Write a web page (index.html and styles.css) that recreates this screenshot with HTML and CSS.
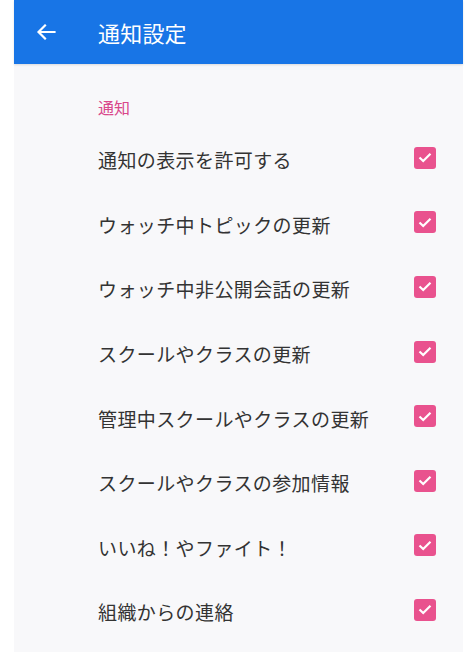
FILE: index.html
```html
<!DOCTYPE html>
<html lang="ja">
<head>
<meta charset="utf-8">
<title>通知設定</title>
<link rel="stylesheet" href="styles.css">
</head>
<body>
<div class="app">
  <header class="bar">
    <svg class="back" width="20" height="16" viewBox="0 0 20 16" aria-hidden="true">
      <path d="M18.5 8H3M9 1.5L2.5 8L9 14.5" fill="none" stroke="#fff" stroke-width="2.2" stroke-linecap="square"/>
    </svg>
    <h1 class="title">通知設定</h1>
  </header>
  <main class="content">
    <div class="section">通知</div>
    <ul class="list">
      <li class="row"><span class="label">通知の表示を許可する</span><span class="check"><svg width="14" height="11" viewBox="0 0 14 11"><path d="M1.5 5.5L5.2 9L12.5 1.8" fill="none" stroke="#fff" stroke-width="2.2"/></svg></span></li>
      <li class="row"><span class="label">ウォッチ中トピックの更新</span><span class="check"><svg width="14" height="11" viewBox="0 0 14 11"><path d="M1.5 5.5L5.2 9L12.5 1.8" fill="none" stroke="#fff" stroke-width="2.2"/></svg></span></li>
      <li class="row"><span class="label">ウォッチ中非公開会話の更新</span><span class="check"><svg width="14" height="11" viewBox="0 0 14 11"><path d="M1.5 5.5L5.2 9L12.5 1.8" fill="none" stroke="#fff" stroke-width="2.2"/></svg></span></li>
      <li class="row"><span class="label">スクールやクラスの更新</span><span class="check"><svg width="14" height="11" viewBox="0 0 14 11"><path d="M1.5 5.5L5.2 9L12.5 1.8" fill="none" stroke="#fff" stroke-width="2.2"/></svg></span></li>
      <li class="row"><span class="label">管理中スクールやクラスの更新</span><span class="check"><svg width="14" height="11" viewBox="0 0 14 11"><path d="M1.5 5.5L5.2 9L12.5 1.8" fill="none" stroke="#fff" stroke-width="2.2"/></svg></span></li>
      <li class="row"><span class="label">スクールやクラスの参加情報</span><span class="check"><svg width="14" height="11" viewBox="0 0 14 11"><path d="M1.5 5.5L5.2 9L12.5 1.8" fill="none" stroke="#fff" stroke-width="2.2"/></svg></span></li>
      <li class="row"><span class="label">いいね！やファイト！</span><span class="check"><svg width="14" height="11" viewBox="0 0 14 11"><path d="M1.5 5.5L5.2 9L12.5 1.8" fill="none" stroke="#fff" stroke-width="2.2"/></svg></span></li>
      <li class="row"><span class="label">組織からの連絡</span><span class="check"><svg width="14" height="11" viewBox="0 0 14 11"><path d="M1.5 5.5L5.2 9L12.5 1.8" fill="none" stroke="#fff" stroke-width="2.2"/></svg></span></li>
    </ul>
  </main>
</div>
</body>
</html>
```
FILE: styles.css
```css
* { box-sizing: border-box; }
html, body {
  margin: 0;
  padding: 0;
  background: #ffffff;
  height: 100%;
}
body {
  font-family: "Noto Sans CJK JP", "Noto Sans", sans-serif;
  overflow: hidden;
}
.app {
  margin: 0 8px 0 14px;
  min-height: 100%;
  background: #f8f8fa;
  display: flex;
  flex-direction: column;
}
.bar {
  height: 64px;
  background: #1875e6;
  display: flex;
  align-items: center;
  padding-left: 22px;
  box-shadow: 0 1px 2px rgba(0,0,0,0.12);
}
.back {
  display: block;
  margin-top: -1px;
}
.title {
  margin: 0 0 0 42px;
  font-size: 22px;
  font-weight: 400;
  color: #ffffff;
  line-height: 1;
  letter-spacing: 0.2px;
}
.content {
  padding: 31px 27px 0 84px;
}
.section {
  font-size: 16px;
  line-height: 24px;
  color: #d9478a;
  margin-bottom: 8px;
}
.list {
  list-style: none;
  margin: 0;
  padding: 0;
}
.row {
  height: 64.6px;
  display: flex;
  align-items: center;
  justify-content: space-between;
}
.label {
  font-size: 19px;
  letter-spacing: 0.4px;
  color: #333333;
  line-height: 28px;
  margin-top: 2px;
}
.check {
  width: 22px;
  height: 22px;
  border-radius: 3px;
  background: #e9528e;
  display: flex;
  align-items: center;
  justify-content: center;
  margin-top: -3px;
}
.check svg { display: block; }
```
